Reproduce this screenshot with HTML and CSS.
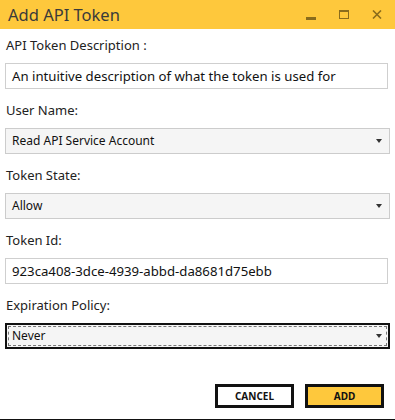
FILE: index.html
```html
<!DOCTYPE html>
<html lang="en">
<head>
    <meta charset="UTF-8">
    <meta name="viewport" content="width=device-width, initial-scale=1.0">
    <title>Add API Token</title>
    <link rel="stylesheet" href="styles.css">
</head>
<body>

<div class="window">
    <div class="titlebar">
        <span class="title">Add API Token</span>
        <div class="controls">
            <span class="ctl ctl-min"></span>
            <span class="ctl ctl-max"></span>
            <svg class="ctl-close" width="10" height="9" viewBox="0 0 10 9">
                <path d="M1 0.5 L9 8.5 M9 0.5 L1 8.5" stroke="#8a6c1c" stroke-width="1.6" fill="none"/>
            </svg>
        </div>
    </div>

    <div class="content">
        <div class="field">
            <label>API Token Description :</label>
            <div class="textbox">An intuitive description of what the token is used for</div>
        </div>
        <div class="field">
            <label>User Name:</label>
            <div class="dropdown"><span>Read API Service Account</span><i class="arrow"></i></div>
        </div>
        <div class="field">
            <label>Token State:</label>
            <div class="dropdown"><span>Allow</span><i class="arrow"></i></div>
        </div>
        <div class="field">
            <label>Token Id:</label>
            <div class="textbox">923ca408-3dce-4939-abbd-da8681d75ebb</div>
        </div>
        <div class="field">
            <label>Expiration Policy:</label>
            <div class="dropdown focused"><span>Never</span><i class="arrow"></i></div>
        </div>
    </div>

    <div class="buttons">
        <button class="btn">CANCEL</button>
        <button class="btn btn-add">ADD</button>
    </div>
</div>

</body>
</html>
```

FILE: styles.css
```css
body {
    margin: 0;
    padding: 0;
    background-color: white;
    font-family: "Noto Sans", "Open Sans", sans-serif;
    color: #222;
}
.window {
    width: 395px;
    height: 420px;
    box-sizing: border-box;
    border-bottom: 1px solid #111;
    display: flex;
    flex-direction: column;
}
.titlebar {
    height: 29px;
    background-color: #fec83c;
    display: flex;
    align-items: center;
    justify-content: space-between;
    padding: 0 13px 0 8px;
}
.title {
    font-size: 16.5px;
    color: #3a3a3a;
    margin-top: -1px;
}
.controls {
    display: flex;
    align-items: center;
    gap: 23px;
    height: 29px;
}
.ctl-min {
    width: 10px;
    height: 3px;
    background-color: #8a6c1c;
    margin-top: 7px;
}
.ctl-max {
    width: 8px;
    height: 6px;
    border: 1px solid #8a6c1c;
    border-top-width: 2px;
    margin-top: -1px;
}
.ctl-close {
    margin-top: -1px;
}
.content {
    padding: 6px 5px 0 5px;
    display: flex;
    flex-direction: column;
    gap: 11px;
}
.field {
    display: flex;
    flex-direction: column;
    gap: 8px;
}
.field label {
    font-size: 13px;
    line-height: 20px;
    padding-left: 1px;
}
.textbox {
    height: 26px;
    box-sizing: border-box;
    width: 383px;
    border: 1px solid #cfcfcf;
    padding: 0 6px;
    font-size: 13.2px;
    line-height: 24px;
    color: #111;
}
.dropdown {
    height: 26px;
    box-sizing: border-box;
    width: 385px;
    border: 1px solid #cccccc;
    background-color: #f5f5f5;
    padding: 0 6px;
    font-size: 12px;
    line-height: 24px;
    color: #111;
    display: flex;
    justify-content: space-between;
    align-items: center;
}
.dropdown.focused {
    border: 2px solid #111;
    outline: 1px dashed #777;
    outline-offset: -4px;
    padding: 0 5px;
}
.arrow {
    width: 0;
    height: 0;
    border-left: 3.5px solid transparent;
    border-right: 3.5px solid transparent;
    border-top: 4px solid #333;
    margin-right: 1px;
}
.buttons {
    margin-top: auto;
    margin-bottom: 11px;
    display: flex;
    justify-content: flex-end;
    gap: 11px;
    padding-right: 11px;
}
.btn {
    width: 79px;
    height: 24px;
    box-sizing: border-box;
    border: 3px solid #111;
    background-color: white;
    font-family: "Noto Sans", sans-serif;
    font-weight: bold;
    font-size: 10px;
    color: #111;
    padding: 0;
    cursor: pointer;
}
.btn-add {
    background-color: #fec83c;
}
```
